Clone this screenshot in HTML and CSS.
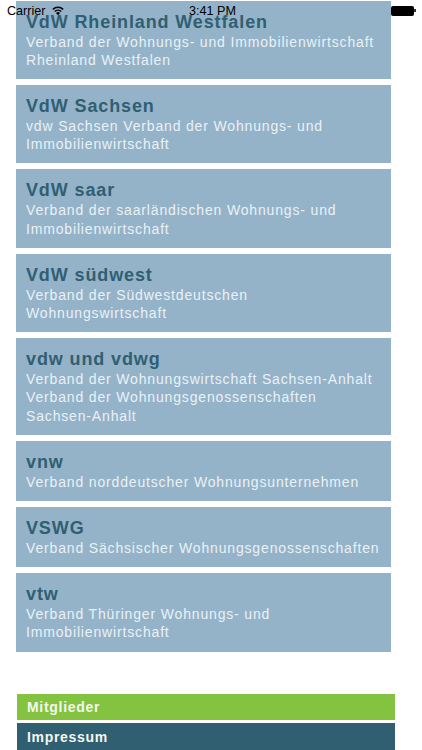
FILE: index.html
```html
<!DOCTYPE html>
<html lang="de">
<head>
<meta charset="utf-8">
<title>Verbände</title>
<link rel="stylesheet" href="styles.css">
</head>
<body>
<div class="screen">
  <div class="status">
    <div class="status-left">
      <span>Carrier</span>
      <svg class="wifi" viewBox="0 0 14 11" width="12" height="9.5"><path d="M7 10.8 4.6 8.2a3.4 3.4 0 0 1 4.8 0Z" fill="#000"/><path d="M3.2 6.4a5.4 5.4 0 0 1 7.6 0M1 3.9a8.6 8.6 0 0 1 12 0" fill="none" stroke="#000" stroke-width="1.7"/></svg>
    </div>
    <div class="status-time">3:41 PM</div>
    <div class="status-right"><span class="battery"></span><span class="battery-tip"></span></div>
  </div>
  <div class="list">
    <div class="card"><h2>VdW Rheinland Westfalen</h2><p>Verband der Wohnungs- und Immobilienwirtschaft<br>Rheinland Westfalen</p></div>
    <div class="card"><h2>VdW Sachsen</h2><p>vdw Sachsen Verband der Wohnungs- und<br>Immobilienwirtschaft</p></div>
    <div class="card"><h2>VdW saar</h2><p>Verband der saarländischen Wohnungs- und<br>Immobilienwirtschaft</p></div>
    <div class="card"><h2>VdW südwest</h2><p>Verband der Südwestdeutschen<br>Wohnungswirtschaft</p></div>
    <div class="card"><h2>vdw und vdwg</h2><p>Verband der Wohnungswirtschaft Sachsen-Anhalt<br>Verband der Wohnungsgenossenschaften<br>Sachsen-Anhalt</p></div>
    <div class="card"><h2>vnw</h2><p>Verband norddeutscher Wohnungsunternehmen</p></div>
    <div class="card"><h2>VSWG</h2><p>Verband Sächsischer Wohnungsgenossenschaften</p></div>
    <div class="card"><h2>vtw</h2><p>Verband Thüringer Wohnungs- und<br>Immobilienwirtschaft</p></div>
  </div>
  <nav class="footer">
    <div class="btn green">Mitglieder</div>
    <div class="btn dark">Impressum</div>
  </nav>
</div>
</body>
</html>
```
FILE: styles.css
```css
* { box-sizing: border-box; }
html, body { margin: 0; padding: 0; background: #fff; }
body { font-family: "Liberation Sans", Arial, sans-serif; }
.screen { position: relative; width: 422px; height: 750px; overflow: hidden; }
.status { position: absolute; top: 0; left: 0; right: 0; height: 22px; z-index: 2; color: #000; font-size: 12.6px; }
.status-left { position: absolute; left: 7px; top: 3px; display: flex; align-items: center; gap: 7px; line-height: 16px; }
.wifi { margin-top: -1px; }
.status-time { position: absolute; left: 189px; top: 3px; line-height: 16px; }
.status-right { position: absolute; left: 391px; top: 5.5px; display: flex; align-items: center; }
.battery { width: 23px; height: 10px; background: #000; border-radius: 2px; }
.battery-tip { width: 2px; height: 3px; background: #333; }
.list { padding: 0.6px 0 0 15.7px; width: 390.7px; display: flex; flex-direction: column; gap: 6px; }
.card { background: #94b3c9; padding: 10px 10px 10px 10.3px; }
h2 { margin: 0; font-size: 18px; line-height: 22px; font-weight: 700; letter-spacing: 0.88px; color: #315f72; }
p { margin: 0; font-size: 14px; line-height: 18.2px; letter-spacing: 0.84px; color: #eaf1f5; }
.footer { position: absolute; left: 16.7px; top: 693.5px; width: 378.3px; display: flex; flex-direction: column; gap: 3.3px; }
.btn { height: 26.7px; padding: 0.7px 0 0 10.3px; font-size: 14px; line-height: 26px; font-weight: 700; letter-spacing: 0.7px; color: #f4f7f0; }
.green { background: #83c340; }
.dark { background: #315f72; }
```
